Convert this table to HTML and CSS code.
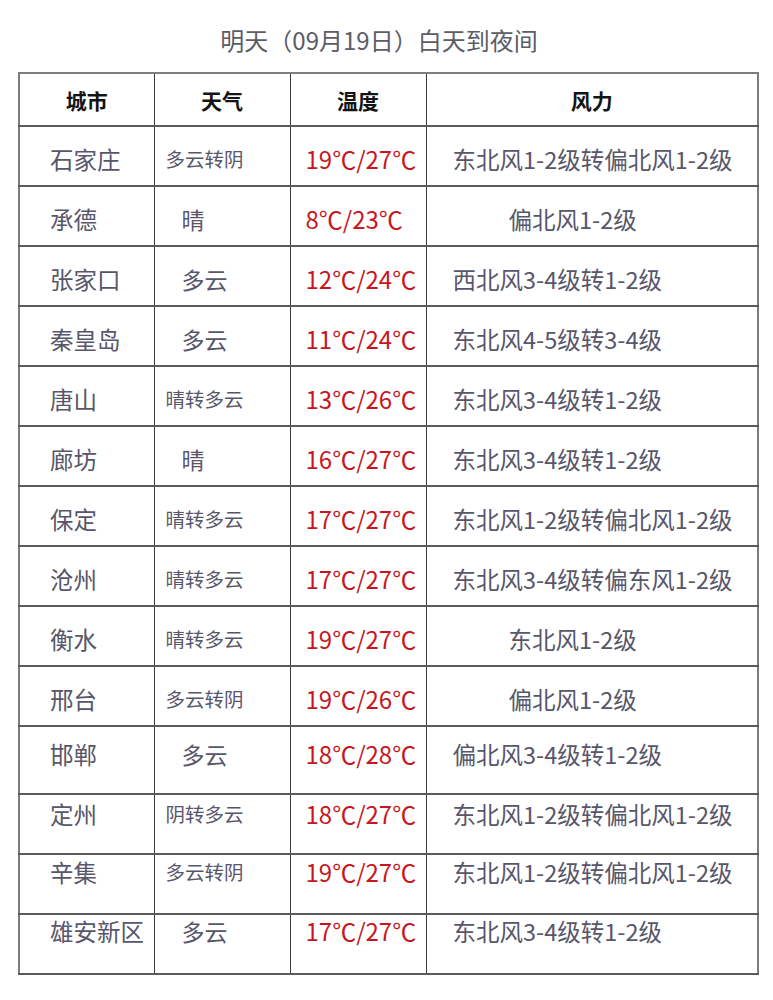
FILE: index.html
```html
<!DOCTYPE html>
<html lang="zh-CN">
<head>
<meta charset="utf-8">
<title>明天（09月19日）白天到夜间</title>
<link rel="stylesheet" href="styles.css">
</head>
<body>
<div class="page">
  <h1 class="title">明天（09月19日）白天到夜间</h1>
  <table class="wx">
    <colgroup>
      <col class="c-city"><col class="c-wea"><col class="c-tmp"><col class="c-wind">
    </colgroup>
    <thead>
      <tr class="head"><th>城市</th><th>天气</th><th>温度</th><th>风力</th></tr>
    </thead>
    <tbody>
      <tr><td class="city">石家庄</td><td class="wea long">多云转阴</td><td class="tmp">19℃/27℃</td><td class="wind">东北风1-2级转偏北风1-2级</td></tr>
      <tr><td class="city">承德</td><td class="wea">晴</td><td class="tmp">8℃/23℃</td><td class="wind ind">偏北风1-2级</td></tr>
      <tr><td class="city">张家口</td><td class="wea">多云</td><td class="tmp">12℃/24℃</td><td class="wind">西北风3-4级转1-2级</td></tr>
      <tr><td class="city">秦皇岛</td><td class="wea">多云</td><td class="tmp">11℃/24℃</td><td class="wind">东北风4-5级转3-4级</td></tr>
      <tr><td class="city">唐山</td><td class="wea long">晴转多云</td><td class="tmp">13℃/26℃</td><td class="wind">东北风3-4级转1-2级</td></tr>
      <tr><td class="city">廊坊</td><td class="wea">晴</td><td class="tmp">16℃/27℃</td><td class="wind">东北风3-4级转1-2级</td></tr>
      <tr><td class="city">保定</td><td class="wea long">晴转多云</td><td class="tmp">17℃/27℃</td><td class="wind">东北风1-2级转偏北风1-2级</td></tr>
      <tr><td class="city">沧州</td><td class="wea long">晴转多云</td><td class="tmp">17℃/27℃</td><td class="wind">东北风3-4级转偏东风1-2级</td></tr>
      <tr><td class="city">衡水</td><td class="wea long">晴转多云</td><td class="tmp">19℃/27℃</td><td class="wind ind">东北风1-2级</td></tr>
      <tr><td class="city">邢台</td><td class="wea long">多云转阴</td><td class="tmp">19℃/26℃</td><td class="wind ind">偏北风1-2级</td></tr>
      <tr class="tall r-a"><td class="city">邯郸</td><td class="wea">多云</td><td class="tmp">18℃/28℃</td><td class="wind">偏北风3-4级转1-2级</td></tr>
      <tr class="top r-b"><td class="city">定州</td><td class="wea long">阴转多云</td><td class="tmp">18℃/27℃</td><td class="wind">东北风1-2级转偏北风1-2级</td></tr>
      <tr class="top r-c"><td class="city">辛集</td><td class="wea long">多云转阴</td><td class="tmp">19℃/27℃</td><td class="wind">东北风1-2级转偏北风1-2级</td></tr>
      <tr class="top r-d"><td class="city city4">雄安新区</td><td class="wea">多云</td><td class="tmp">17℃/27℃</td><td class="wind">东北风3-4级转1-2级</td></tr>
    </tbody>
  </table>
</div>
</body>
</html>
```

FILE: styles.css
```css
html, body {
  margin: 0;
  padding: 0;
  background: #ffffff;
}

body {
  font-family: "Noto Sans CJK SC", "Noto Sans", sans-serif;
  color: #57566a;
}

.page {
  width: 773px;
  padding-top: 26px;
}

.title {
  margin: 0 0 18px 0;
  padding-right: 15px;
  font-size: 24px;
  line-height: 28px;
  font-weight: 400;
  color: #5c5c66;
  text-align: center;
}

.wx {
  margin-left: 18px;
  width: 739px;
  border-collapse: collapse;
  table-layout: fixed;
  border: 2px solid #7d7d7d;
}

.c-city { width: 135px; }
.c-wea  { width: 136px; }
.c-tmp  { width: 136px; }
.c-wind { width: 332px; }

.wx th,
.wx td {
  border-left: 1px solid #3a3a3a;
  border-right: 1px solid #3a3a3a;
  border-bottom: 2px solid #5a5a5a;
  white-space: nowrap;
  overflow: hidden;
  box-sizing: border-box;
}

.wx th {
  height: 53px;
  padding: 0;
  font-size: 21px;
  font-weight: 700;
  color: #141414;
  text-align: center;
  vertical-align: middle;
  line-height: 24px;
}

.wx td {
  height: 60px;
  padding: 6px 0 0 0;
  font-size: 23.5px;
  line-height: 28px;
  text-align: left;
  vertical-align: middle;
}

.wx td.city { padding-left: 30px; }

.wx td.wea { padding-left: 27px; font-size: 23px; }
.wx td.wea.long { padding-left: 11px; font-size: 19.5px; }

.wx td.tmp {
  padding-left: 15px;
  color: #c8161e;
  font-size: 24px;
}

.wx td.wind { padding-left: 26px; }
.wx td.wind.ind { padding-left: 82px; }

.wx .tall td { height: 68px; vertical-align: top; padding-top: 13px; }

.wx .top td { vertical-align: top; }
.wx .r-b td { padding-top: 5px; }
.wx .r-c td { padding-top: 3px; }
.wx .r-d td { padding-top: 2px; }
```
